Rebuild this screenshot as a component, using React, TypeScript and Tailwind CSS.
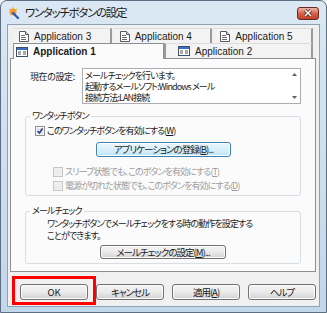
import React from "react";

const jp = "font-['Noto_Sans_CJK_JP',sans-serif] [font-feature-settings:'palt']";

function DocIcon() {
  return (
    <svg width="10" height="11" viewBox="0 0 10 11" className="shrink-0">
      <path d="M0.5 0.5h6l3 3v7h-9z" fill="#fff" stroke="#5a5a5a" />
      <path d="M6.5 0.5v3h3" fill="#ddd" stroke="#5a5a5a" />
      <path d="M2 4.5h4M2 6.5h5M2 8.5h5" stroke="#6a6a6a" />
    </svg>
  );
}

function WinIcon() {
  return (
    <svg width="12" height="10" viewBox="0 0 12 10" className="shrink-0">
      <rect x="0.5" y="0.5" width="11" height="9" fill="#fff" stroke="#3b4f6b" />
      <rect x="1" y="1" width="10" height="2" fill="#3a6fc4" />
      <path d="M2 5h3M2 7h3M7 5h3M7 7h3" stroke="#555" />
    </svg>
  );
}

function Check({ checked, disabled }: { checked?: boolean; disabled?: boolean }) {
  return (
    <svg width="10" height="10" viewBox="0 0 10 10" className="shrink-0">
      <rect
        x="0.5"
        y="0.5"
        width="9"
        height="9"
        fill={disabled ? "#f4f4f4" : "#fff"}
        stroke={disabled ? "#c6c6c6" : "#8e8f8f"}
      />
      <rect x="1.5" y="1.5" width="7" height="7" fill={disabled ? "#ececec" : "#e3e7ef"} />
      {checked && <path d="M2.5 5l2 2 3-4.5" fill="none" stroke="#2b3f8c" strokeWidth="1.6" />}
    </svg>
  );
}

function Btn({ children, className = "" }: { children: React.ReactNode; className?: string }) {
  return (
    <div
      className={
        "flex items-center justify-center whitespace-nowrap rounded-[3px] border border-[#707070] bg-gradient-to-b from-[#f3f3f3] via-[#ebebeb] to-[#d2d2d2] shadow-[inset_0_0_0_1px_#fcfcfc] text-[9.5px] tracking-[-1px] text-[#1a1a1a] " +
        jp +
        " " +
        className
      }
    >
      {children}
    </div>
  );
}

export default function App() {
  return (
    <div className="w-[327px] h-[313px] overflow-hidden bg-[#f0f0f0]">
      <div className="w-[327px] h-[313px] flex flex-col border border-[#5b6e82] rounded-t-[7px] bg-gradient-to-b from-[#dbe8f4] via-[#cfdfee] to-[#c3d7ea]">
        {/* title bar */}
        <div className="h-[23px] shrink-0 flex items-center pl-[6px] pr-[7px]">
          <svg width="14" height="14" viewBox="0 0 14 14">
            <circle cx="6" cy="6" r="3.5" fill="#f29a2e" />
            <path d="M2 3l2 1M6 1v2M10 3l-2 1" stroke="#f0b640" strokeWidth="1.2" />
            <path d="M6 7l5 5" stroke="#2a56b8" strokeWidth="2.2" strokeLinecap="round" />
          </svg>
          <span className={"ml-[4px] text-[11.5px] tracking-[-1.3px] text-[#1b1b1b] " + jp}>ワンタッチボタンの設定</span>
          <div className="ml-auto mt-[1px] w-[22px] h-[13px] rounded-[3px] border border-[#6b2a20] bg-gradient-to-b from-[#eeb3a6] via-[#d9604a] to-[#c43f28] flex items-center justify-center">
            <svg width="10" height="8" viewBox="0 0 10 8">
              <path d="M2 1l6 6M8 1l-6 6" stroke="#5a1a12" strokeWidth="3" />
              <path d="M2 1l6 6M8 1l-6 6" stroke="#fff" strokeWidth="1.6" />
            </svg>
          </div>
        </div>

        {/* client area */}
        <div className="flex-1 mx-[6px] mb-[5px] bg-[#f0f0f0] border border-[#8da2b8] flex flex-col">
          {/* tabs */}
          <div className="pl-[5px] pr-[6px] pt-[3px] font-['Liberation_Sans',sans-serif] text-[10px] text-[#1a1a1a]">
            <div className="h-[15px] flex gap-[2px]">
              {["Application 3", "Application 4", "Application 5"].map((t) => (
                <div
                  key={t}
                  className="flex-1 flex items-center gap-[5px] pl-[6px] border-t border-t-[#dcdcdc] border-r-2 border-r-[#9a9a9a] bg-[#f3f3f3]"
                >
                  <DocIcon />
                  <span>{t}</span>
                </div>
              ))}
            </div>
            <div className="h-[15px] flex">
              <div className="w-[151px] flex items-center gap-[5px] pl-[2px] bg-[#fbfbfb] border-x border-t border-[#8c8f96] font-bold relative z-10 h-[16px]">
                <WinIcon />
                <span>Application 1</span>
              </div>
              <div className="flex-1 flex items-center gap-[5px] pl-[12px] bg-[#f3f3f3] border-t border-t-[#dcdcdc] border-l-2 border-l-[#9a9a9a] border-r-2 border-r-[#9a9a9a]">
                <WinIcon />
                <span>Application 2</span>
              </div>
            </div>
          </div>

          {/* panel */}
          <div className={"ml-[2px] mr-[3px] h-[214px] bg-[#fbfbfb] border border-[#8c8f96] px-[14px] pt-[9px] text-[9px] tracking-[-0.9px] text-[#1a1a1a] whitespace-nowrap " + jp}>
            <div className="flex pl-[5px]">
              <span className="mt-[2px] w-[52px] shrink-0 tracking-[-0.4px]">現在の設定:</span>
              <div className="flex-1 h-[36px] bg-white border border-[#abadb3] flex">
                <div className="flex-1 pl-[2px] pt-[1px] leading-[11px]">
                  <div>メールチェックを行います。</div>
                  <div>起動するメールソフト:Windows メール</div>
                  <div>接続方法:LAN接続</div>
                </div>
                <div className="w-[12px] flex flex-col items-center justify-between py-[4px]">
                  <svg width="5" height="3" viewBox="0 0 5 3">
                    <path d="M0 3L2.5 0 5 3z" fill="#606060" />
                  </svg>
                  <svg width="5" height="3" viewBox="0 0 5 3">
                    <path d="M0 0h5L2.5 3z" fill="#606060" />
                  </svg>
                </div>
              </div>
            </div>

            <fieldset className="mt-[6px] h-[86px] border border-[#d5dfe5] rounded-[3px] pl-[9px]">
              <legend className="ml-[-5px] px-[2px] leading-[12px]">ワンタッチボタン</legend>
              <div className="flex items-center gap-[2px] mt-[4px] h-[10px]">
                <Check checked />
                <span>
                  このワンタッチボタンを有効にする(<span className="underline">W</span>)
                </span>
              </div>
              <div className="mt-[6px] ml-[61px] w-[135px] h-[15px] rounded-[3px] border border-[#3c7fb1] bg-gradient-to-b from-[#eaf6fd] via-[#d9effc] to-[#bde4f8] shadow-[inset_0_0_0_1px_#fff] flex items-center justify-center text-[9.5px] tracking-[-1px]">
                アプリケーションの登録(<span className="underline">B</span>)...
              </div>
              <div className="flex items-center gap-[2px] mt-[10px] ml-[18px] h-[10px] text-[#9c9c9c]">
                <Check disabled />
                <span>
                  スリープ状態でも、このボタンを有効にする(<span className="underline">T</span>)
                </span>
              </div>
              <div className="flex items-center gap-[2px] mt-[4px] ml-[18px] h-[10px] text-[#9c9c9c]">
                <Check disabled />
                <span>
                  電源が切れた状態でも、このボタンを有効にする(<span className="underline">D</span>)
                </span>
              </div>
            </fieldset>

            <fieldset className="mt-[9px] h-[59px] border border-[#d5dfe5] rounded-[3px] pl-[21px]">
              <legend className="ml-[-17px] px-[2px] leading-[12px]">メールチェック</legend>
              <div className="mt-[1px] leading-[12px]">
                ワンタッチボタンでメールチェックをする時の動作を設定する
                <br />
                ことができます。
              </div>
              <Btn className="mt-[3px] ml-[53px] w-[126px] h-[14px]">
                メールチェックの設定(<span className="underline">M</span>)...
              </Btn>
            </fieldset>
          </div>

          {/* bottom buttons */}
          <div className="mt-[12px] pl-[12px] flex gap-[8px]">
            <div className="relative">
              <Btn className="w-[68px] h-[16px] font-['Liberation_Sans',sans-serif] tracking-normal">OK</Btn>
              <div className="absolute left-[-8px] top-[-8px] w-[84px] h-[29px] border-[3px] border-[#ff0000]" />
            </div>
            <Btn className="w-[68px] h-[16px]">キャンセル</Btn>
            <Btn className="w-[68px] h-[16px]">
              適用(<span className="underline">A</span>)
            </Btn>
            <Btn className="w-[68px] h-[16px]">ヘルプ</Btn>
          </div>
        </div>
      </div>
    </div>
  );
}
